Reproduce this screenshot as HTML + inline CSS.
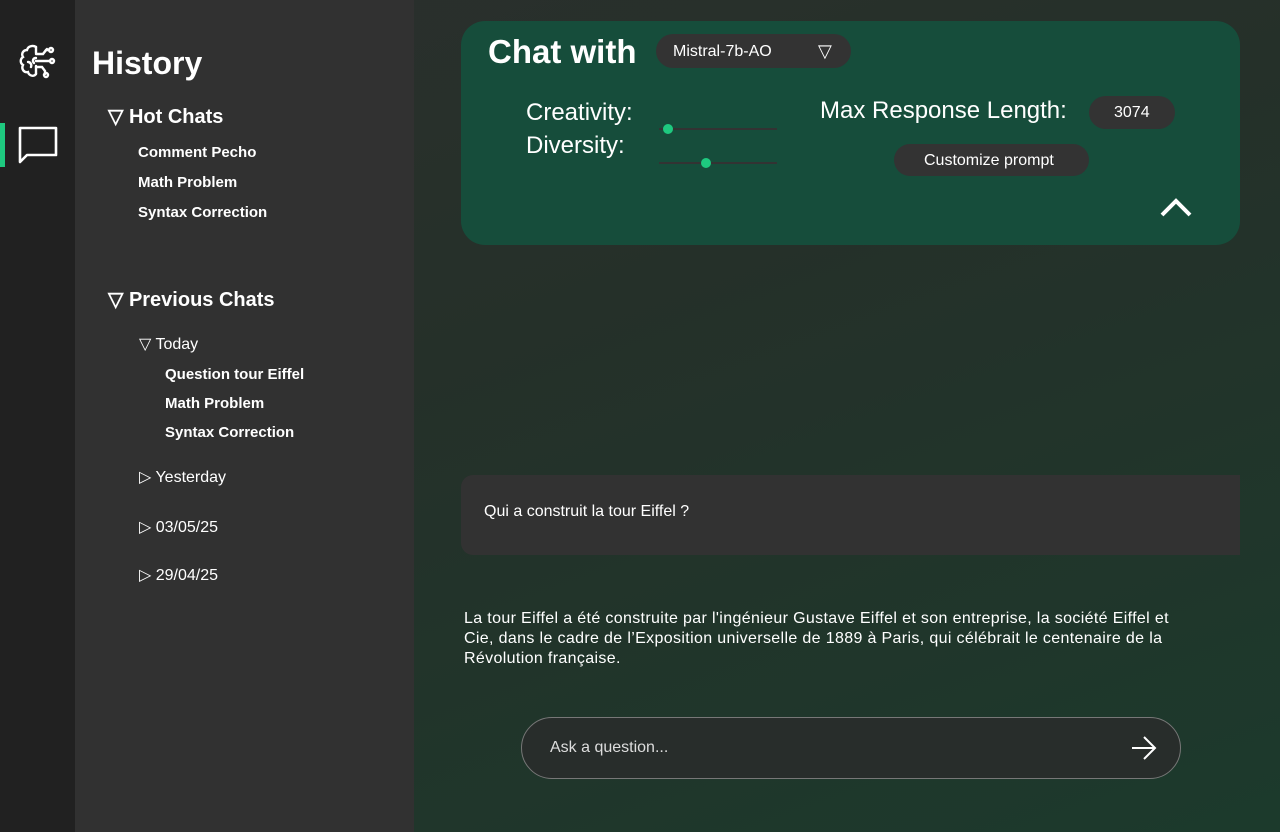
<!DOCTYPE html>
<html><head><meta charset="utf-8"><style>
*{margin:0;padding:0;box-sizing:border-box}
body{width:1280px;height:832px;overflow:hidden;font-family:"Liberation Sans",sans-serif;color:#fff;position:relative;background:linear-gradient(160deg,#2b2f2d 0%,#253029 40%,#1c3a2c 100%)}
.rail{position:absolute;left:0;top:0;width:75px;height:832px;background:#212121}
.side{position:absolute;left:75px;top:0;width:339px;height:832px;background:#313131}
.t{position:absolute;white-space:nowrap}
.b{font-weight:bold}
.card{position:absolute;left:461px;top:21px;width:779px;height:224px;background:#164d3b;border-radius:24px}
.pill{position:absolute;background:#333;border-radius:18px}
.track{position:absolute;height:2px;background:#333}
.dot{position:absolute;width:10px;height:10px;border-radius:50%;background:#1ec97f}
</style></head><body>
<div class="rail"></div>
<div style="position:absolute;left:0;top:123px;width:5px;height:44px;background:#1ec97f"></div>
<svg style="position:absolute;left:18px;top:42px" width="40" height="40" viewBox="0 0 40 40" fill="none" stroke="#fff" stroke-width="2.4" stroke-linecap="round">
<path d="M18 5c-3-2-8-1-9 3-4 0-6 4-4 7-3 2-3 6 0 8-2 4 1 8 5 7 1 4 6 5 8 2"/>
<path d="M18 5v6M18 16c-3 0-4 3-2 5M10 20c2 0 4 2 3 5M18 24v8"/>
<path d="M18 12h7l3-4h3M18 19h14M18 25h6l3 4v3M25 12l4-5M28 19"/>
<circle cx="33" cy="8" r="2"/><circle cx="34" cy="19" r="2"/><circle cx="28" cy="33" r="2"/>
</svg>
<svg style="position:absolute;left:18px;top:126px" width="40" height="40" viewBox="0 0 40 40" fill="none" stroke="#fff" stroke-width="2.6">
<path d="M2 2h36v27H9l-7 7z" stroke-linejoin="round"/>
</svg>
<div class="side"></div>
<div class="t b" style="left:92px;top:45px;font-size:32px">History</div>
<div class="t b" style="left:108px;top:104px;font-size:20px">▽ Hot Chats</div>
<div class="t b" style="left:138px;top:144px;font-size:15px">Comment Pecho</div>
<div class="t b" style="left:138px;top:174px;font-size:15px">Math Problem</div>
<div class="t b" style="left:138px;top:204px;font-size:15px">Syntax Correction</div>
<div class="t b" style="left:108px;top:287px;font-size:20px">▽ Previous Chats</div>
<div class="t" style="left:139px;top:334px;font-size:16px">▽ Today</div>
<div class="t b" style="left:165px;top:366px;font-size:15px">Question tour Eiffel</div>
<div class="t b" style="left:165px;top:395px;font-size:15px">Math Problem</div>
<div class="t b" style="left:165px;top:424px;font-size:15px">Syntax Correction</div>
<div class="t" style="left:139px;top:467px;font-size:16px">▷ Yesterday</div>
<div class="t" style="left:139px;top:517px;font-size:16px">▷ 03/05/25</div>
<div class="t" style="left:139px;top:565px;font-size:16px">▷ 29/04/25</div>

<div class="card"></div>
<div class="t b" style="left:488px;top:33px;font-size:33px">Chat with</div>
<div class="pill" style="left:656px;top:34px;width:195px;height:34px"></div>
<div class="t" style="left:673px;top:43px;font-size:16px">Mistral-7b-AO</div>
<div class="t" style="left:818px;top:41px;font-size:18px">▽</div>
<div class="t" style="left:526px;top:99px;font-size:24px">Creativity:</div>
<div class="t" style="left:526px;top:132px;font-size:24px">Diversity:</div>
<div class="track" style="left:659px;top:128px;width:118px"></div>
<div class="dot" style="left:663px;top:124px"></div>
<div class="track" style="left:659px;top:162px;width:118px"></div>
<div class="dot" style="left:701px;top:158px"></div>
<div class="t" style="left:820px;top:97px;font-size:24px">Max Response Length:</div>
<div class="pill" style="left:1089px;top:96px;width:86px;height:33px"></div>
<div class="t" style="left:1114px;top:104px;font-size:16px">3074</div>
<div class="pill" style="left:894px;top:144px;width:195px;height:32px"></div>
<div class="t" style="left:924px;top:152px;font-size:16px">Customize prompt</div>
<svg style="position:absolute;left:1160px;top:196px" width="32" height="22" viewBox="0 0 32 22" fill="none" stroke="#fff" stroke-width="4"><path d="M2 19L16 5l14 14"/></svg>

<div style="position:absolute;left:461px;top:475px;width:779px;height:80px;background:#323232;border-radius:12px 0 0 12px"></div>
<div class="t" style="left:484px;top:503px;font-size:16px">Qui a construit la tour Eiffel ?</div>
<div style="position:absolute;left:464px;top:609px;white-space:nowrap;font-size:16px;letter-spacing:0.35px;line-height:20px">La tour Eiffel a été construite par l'ingénieur Gustave Eiffel et son entreprise, la société Eiffel et<br>Cie, dans le cadre de l’Exposition universelle de 1889 à Paris, qui célébrait le centenaire de la<br>Révolution française.</div>

<div style="position:absolute;left:521px;top:717px;width:660px;height:62px;border:1px solid #777;border-radius:31px;background:#282d2b"></div>
<div class="t" style="left:550px;top:739px;font-size:16px;color:#ddd">Ask a question...</div>
<svg style="position:absolute;left:1130px;top:735px" width="28" height="26" viewBox="0 0 28 26" fill="none" stroke="#fff" stroke-width="2"><path d="M2 13h23M14 2l11 11-11 11"/></svg>
</body></html>
